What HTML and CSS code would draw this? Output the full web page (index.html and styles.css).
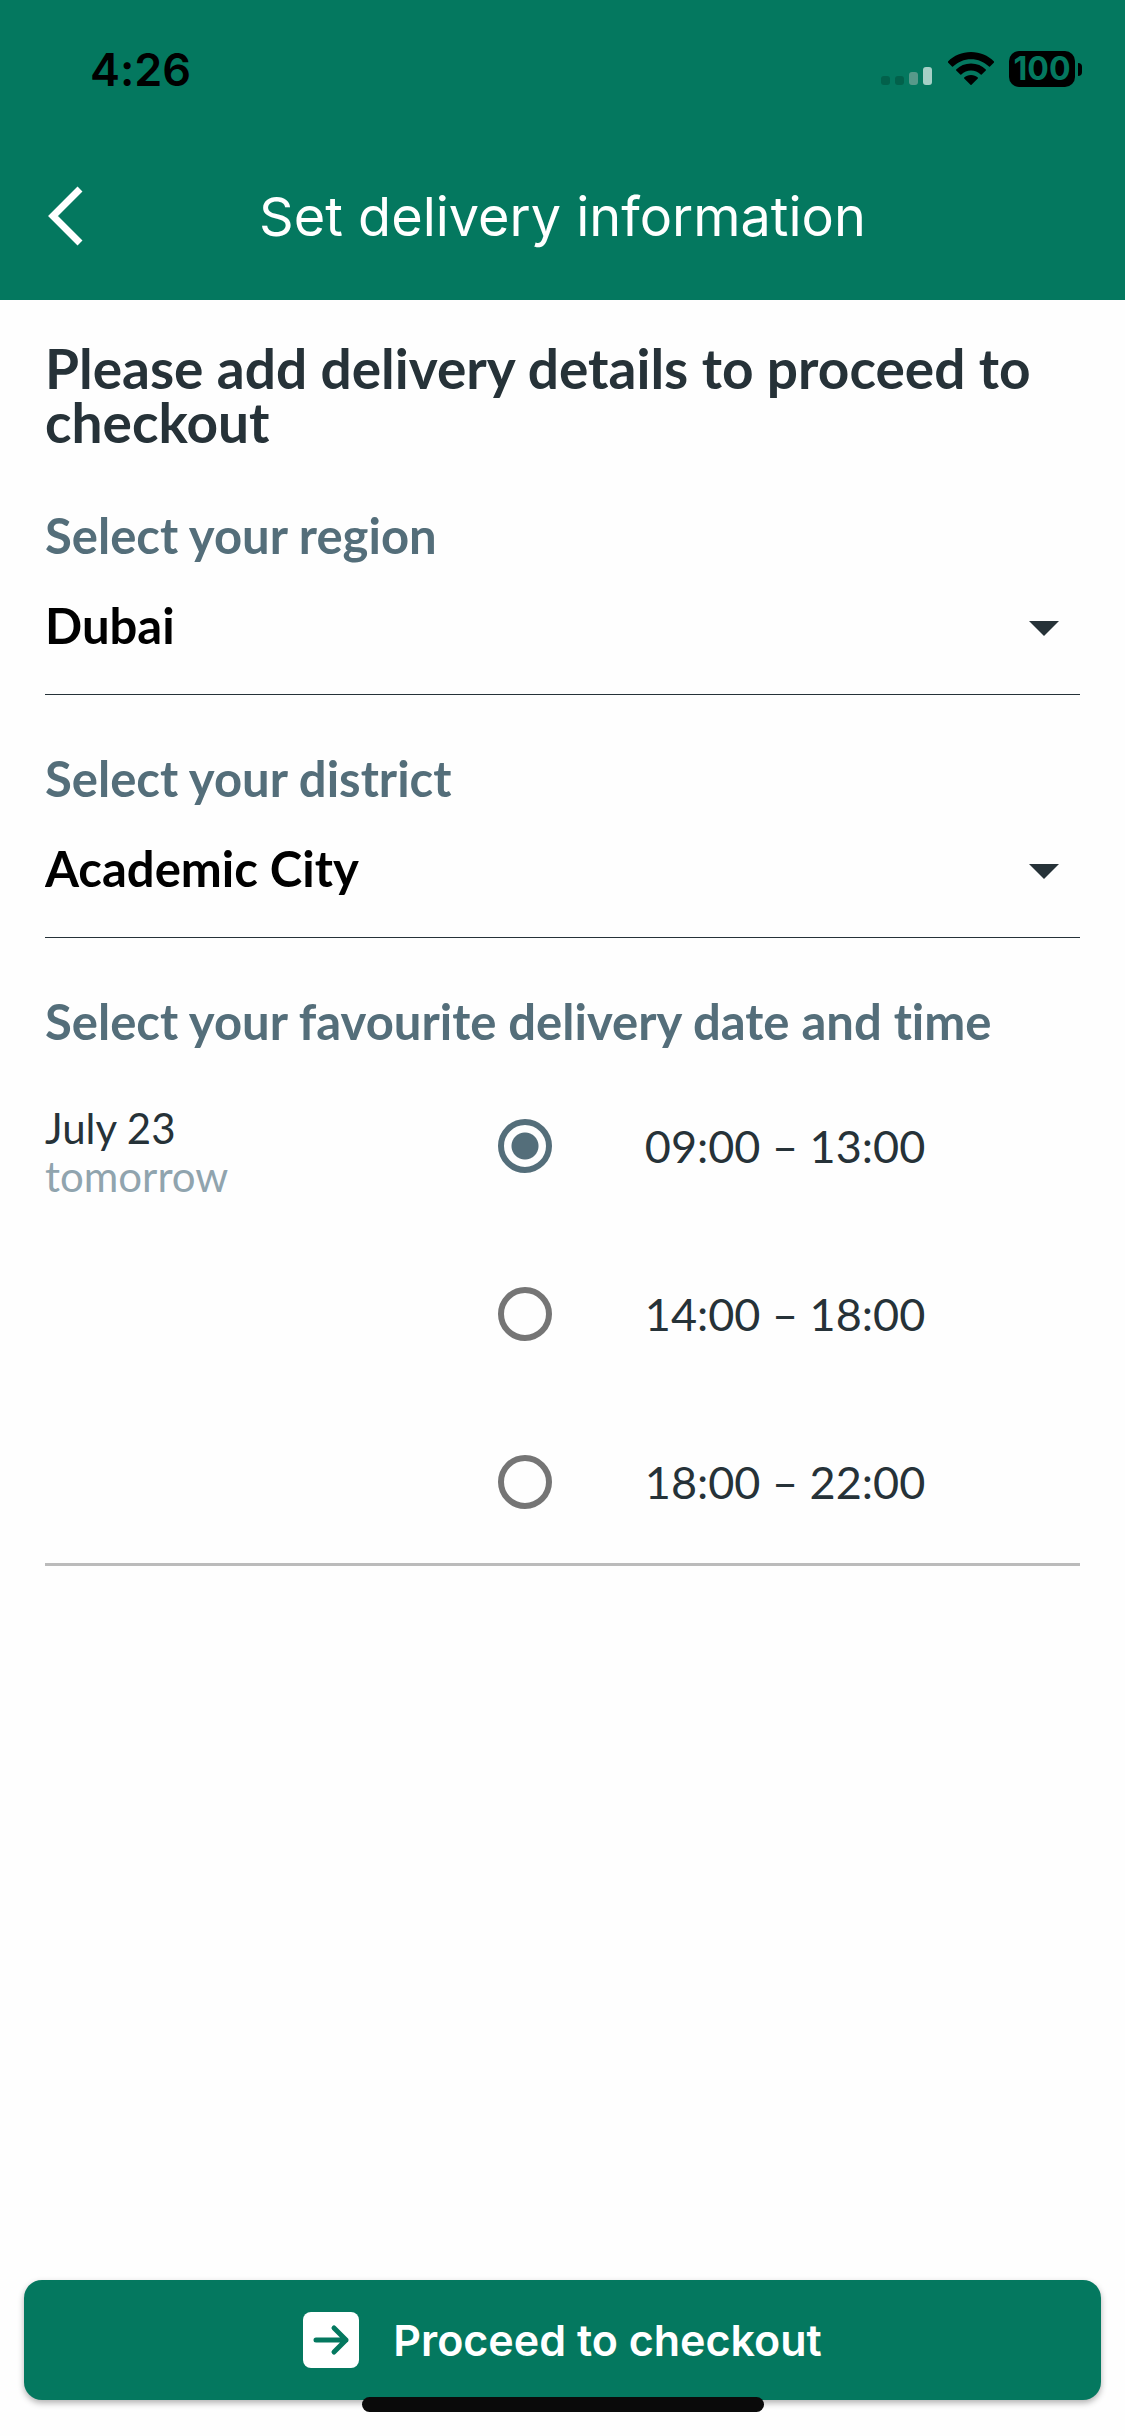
FILE: index.html
```html
<!doctype html>
<html lang="en">

<head>
	<meta charset="utf-8">
	<title>Set delivery information</title>
	<meta name="viewport" content="width=device-width, initial-scale=1">
	<link rel="stylesheet" href="styles.css">
</head>

<body>
	<header class="header">
		<div class="status">
			<span class="clock">4:26</span>
			<div class="status-icons">
				<svg class="signal" width="52" height="18" viewBox="0 0 52 18">
					<rect x="0" y="9" width="9" height="9" rx="3" fill="#02614b"/>
					<rect x="14" y="9" width="9" height="9" rx="3" fill="#02614b"/>
					<rect x="28" y="5" width="9" height="13" rx="3" fill="#58998a"/>
					<rect x="42" y="0" width="9" height="18" rx="3" fill="#a5d0c6"/>
				</svg>
				<svg width="46" height="34" viewBox="0 0 46 34">
					<path d="M23 0C14 0 6 3.500 0 9.500Q-.3 10 0 10.500L4 14.500Q4.500 15 5 14.500C10 9.800 16 7.200 23 7.200S36 9.800 41 14.500Q41.500 15 42 14.500L46 10.500Q46.300 10 46 9.500C40 3.500 32 0 23 0Z"/>
					<path d="M23 11.500C17 11.500 12 13.800 8.200 17.500Q7.800 18 8.200 18.500L12.300 22.500Q12.800 23 13.300 22.500C16 20 19.300 18.600 23 18.600S30 20 32.700 22.500Q33.200 23 33.700 22.500L37.800 18.500Q38.200 18 37.800 17.500C34 13.800 29 11.500 23 11.500Z"/>
					<path d="M23 23C20.200 23 18 23.900 16.200 25.400Q15.700 26 16.200 26.500L22.500 32.700Q23 33.200 23.500 32.700L29.800 26.500Q30.300 26 29.800 25.400C28 23.900 25.800 23 23 23Z"/>
				</svg>
				<span class="battery">100</span>
			</div>
		</div>
		<div class="titlebar">
			<button class="back" type="button" aria-label="Back">
				<svg width="36" height="60" viewBox="0 0 36 60">
					<path d="M32 3L5 30L32 57" fill="none" stroke="#fff" stroke-width="7"/>
				</svg>
			</button>
			<h1>Set delivery information</h1>
		</div>
	</header>

	<main>
		<h2>Please add delivery details to proceed to checkout</h2>

		<div class="field">
			<label class="label" for="region">Select your region</label>
			<div class="select">
				<select id="region">
					<option>Dubai</option>
				</select>
				<svg class="caret" width="30" height="15" viewBox="0 0 30 15"><path d="M0 0H30L15 15Z"/></svg>
			</div>
		</div>

		<div class="field">
			<label class="label" for="district">Select your district</label>
			<div class="select">
				<select id="district">
					<option>Academic City</option>
				</select>
				<svg class="caret" width="30" height="15" viewBox="0 0 30 15"><path d="M0 0H30L15 15Z"/></svg>
			</div>
		</div>

		<h3 class="label">Select your favourite delivery date and time</h3>
		<div class="day">
			<div class="date">
				<div>July 23</div>
				<div class="relative">tomorrow</div>
			</div>
			<div class="slots">
				<label><input type="radio" name="slot" checked>09:00 – 13:00</label>
				<label><input type="radio" name="slot">14:00 – 18:00</label>
				<label><input type="radio" name="slot">18:00 – 22:00</label>
			</div>
		</div>
	</main>

	<footer>
		<button class="checkout" type="button">
			<svg width="56" height="56" viewBox="0 0 56 56">
				<rect width="56" height="56" rx="8" fill="#fff"/>
				<path d="M13 28H43M31 16L43 28L31 40" fill="none" stroke="#04785f" stroke-width="5" stroke-linecap="round" stroke-linejoin="round"/>
			</svg>
			Proceed to checkout
		</button>
		<div class="home-indicator"></div>
	</footer>
</body>
</html>
```

FILE: styles.css
```css
*, *:after, *:before{
	box-sizing: border-box;
}

body{
	min-height: 100vh;
	margin: 0;
	display: flex;
	flex-direction: column;

	background-color: #fefefe;
	color: #263238;
	font-family: Lato, "Open Sans", sans-serif;
	font-variant-ligatures: none;
}

h1, h2, h3{
	margin: 0;
}

button, select{
	border: 0;
	background: none;
	font: inherit;
	color: inherit;
	padding: 0;
}

svg{
	display: block;
}

/* header */
.header{
	background-color: #04785f;
	font-family: Inter, sans-serif;
}

.status{
	display: flex;
	justify-content: space-between;
	align-items: center;
	height: 138px;
	padding: 0 43px 0 90px;
	color: #000;
}

.clock{
	font-size: 45px;
	font-weight: 600;
}

.status-icons{
	display: flex;
	align-items: center;
	gap: 15px;
}

.signal{
	align-self: flex-end;
	margin-bottom: 2px;
}

.battery{
	position: relative;
	width: 66px;
	height: 36px;
	margin-right: 7px;
	border-radius: 10px;
	background-color: #000;
	color: #04785f;
	font-size: 32px;
	font-weight: 700;
	line-height: 36px;
	text-align: center;
}

.battery:after{
	content: "";
	position: absolute;
	top: 12px;
	right: -7px;
	width: 4px;
	height: 13px;
	border-radius: 0 4px 4px 0;
	background-color: #000;
}

.titlebar{
	display: grid;
	grid-template-columns: 36px 1fr 36px;
	align-items: center;
	height: 162px;
	padding: 0 48px 6px;
}

h1{
	padding-top: 2px;
	color: #fff;
	font-size: 54px;
	font-weight: 400;
	line-height: 60px;
	text-align: center;
}

/* form */
main{
	flex: 1;
	padding: 41px 45px 0;
}

h2{
	margin-bottom: 56px;
	font-size: 55px;
	font-weight: 700;
	line-height: 54px;
}

.label{
	display: block;
	color: #546e7a;
	font-size: 49px;
	font-weight: 700;
	line-height: 60px;
}

.field{
	margin-bottom: 53px;
}

.select{
	position: relative;
	border-bottom: 1px solid #263238;
}

select{
	display: block;
	width: 100%;
	height: 129px;
	padding-bottom: 9px;
	appearance: none;
	color: #000;
	font-size: 49px;
	font-weight: 700;
}

.caret{
	position: absolute;
	top: 56px;
	right: 21px;
	fill: #263238;
	pointer-events: none;
}

.day{
	display: grid;
	grid-template-columns: 7fr 9fr;
	padding: 53px 0 54px;
	border-bottom: 3px solid #bbb;
}

.date{
	font-size: 42px;
	line-height: 48px;
}

.relative{
	color: #90a4ae;
}

.slots{
	display: flex;
	flex-direction: column;
	gap: 114px;
	padding-top: 15px;
}

.slots label{
	display: flex;
	align-items: center;
	gap: 93px;
	font-size: 45px;
	line-height: 54px;
}

input[type=radio]{
	appearance: none;
	width: 54px;
	height: 54px;
	margin: 0;
	border: 6px solid #757575;
	border-radius: 50%;
}

input[type=radio]:checked{
	border-color: #546e7a;
	background: radial-gradient(circle, #546e7a 13px, transparent 14px);
}

/* bottom bar */
footer{
	position: relative;
	padding: 0 24px 36px;
}

.checkout{
	display: flex;
	justify-content: center;
	align-items: center;
	gap: 34px;
	width: 100%;
	height: 120px;
	border-radius: 18px;
	background-color: #04785f;
	box-shadow: 0 3px 6px rgba(0, 0, 0, .3);
	color: #fff;
	font-family: Inter, sans-serif;
	font-size: 43px;
	font-weight: 600;
}

.home-indicator{
	position: absolute;
	bottom: 24px;
	left: 50%;
	width: 402px;
	height: 15px;
	margin-left: -201px;
	border-radius: 8px;
	background-color: #0a0a0a;
}
```
